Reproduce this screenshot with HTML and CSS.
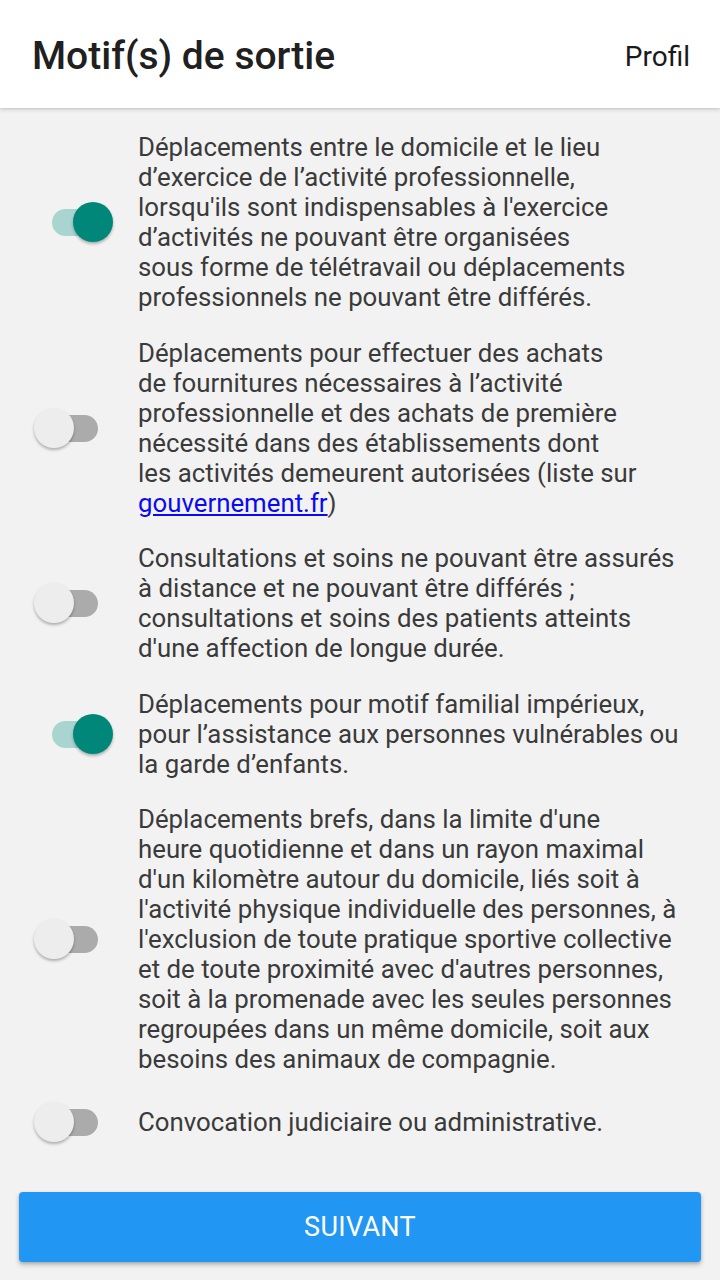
FILE: index.html
```html
<!DOCTYPE html>
<html lang="fr">
<head>
<meta charset="utf-8">
<title>Motif(s) de sortie</title>
<link rel="stylesheet" href="styles.css">
</head>
<body>
<header class="appbar">
  <h1 class="title">Motif(s) de sortie</h1>
  <span class="action">Profil</span>
</header>
<main class="list">
  <div class="row">
    <div class="switch on"><span class="track"></span><span class="thumb"></span></div>
    <p class="label">Déplacements entre le domicile et le lieu<br>d’exercice de l’activité professionnelle,<br>lorsqu'ils sont indispensables à l'exercice<br>d’activités ne pouvant être organisées<br>sous forme de télétravail ou déplacements<br>professionnels ne pouvant être différés.</p>
  </div>
  <div class="row">
    <div class="switch"><span class="track"></span><span class="thumb"></span></div>
    <p class="label">Déplacements pour effectuer des achats<br>de fournitures nécessaires à l’activité<br>professionnelle et des achats de première<br>nécessité dans des établissements dont<br>les activités demeurent autorisées (liste sur<br><a class="link" href="#">gouvernement.fr</a>)</p>
  </div>
  <div class="row">
    <div class="switch"><span class="track"></span><span class="thumb"></span></div>
    <p class="label">Consultations et soins ne pouvant être assurés<br>à distance et ne pouvant être différés ;<br>consultations et soins des patients atteints<br>d'une affection de longue durée.</p>
  </div>
  <div class="row">
    <div class="switch on"><span class="track"></span><span class="thumb"></span></div>
    <p class="label">Déplacements pour motif familial impérieux,<br>pour l’assistance aux personnes vulnérables ou<br>la garde d’enfants.</p>
  </div>
  <div class="row">
    <div class="switch"><span class="track"></span><span class="thumb"></span></div>
    <p class="label">Déplacements brefs, dans la limite d'une<br>heure quotidienne et dans un rayon maximal<br>d'un kilomètre autour du domicile, liés soit à<br>l'activité physique individuelle des personnes, à<br>l'exclusion de toute pratique sportive collective<br>et de toute proximité avec d'autres personnes,<br>soit à la promenade avec les seules personnes<br>regroupées dans un même domicile, soit aux<br>besoins des animaux de compagnie.</p>
  </div>
  <div class="row">
    <div class="switch"><span class="track"></span><span class="thumb"></span></div>
    <p class="label">Convocation judiciaire ou administrative.</p>
  </div>
</main>
<footer class="actions">
  <button class="btn" type="button">SUIVANT</button>
</footer>
</body>
</html>
```
FILE: styles.css
```css
* { box-sizing: border-box; }
html, body {
  margin: 0;
  padding: 0;
  background: #f2f2f2;
  font-family: Roboto, "Noto Sans", sans-serif;
}
body {
  width: 720px;
  height: 1280px;
  overflow: hidden;
}
.appbar {
  height: 108px;
  background: #fff;
  display: flex;
  align-items: center;
  justify-content: space-between;
  padding: 4px 30px 0 32px;
  box-shadow: 0 2px 4px rgba(0,0,0,0.12), 0 1px 2px rgba(0,0,0,0.08);
  position: relative;
  z-index: 1;
}
.title {
  margin: 0;
  font-size: 39px;
  font-weight: 500;
  color: #202020;
  letter-spacing: 0;
}
.action {
  font-size: 28px;
  color: #1a1a1a;
}
.list {
  padding: 24px 0 0 33px;
  display: flex;
  flex-direction: column;
  gap: 25.5px;
}
.row {
  display: flex;
  align-items: center;
  gap: 25px;
  min-height: 44px;
}
.label {
  margin: 0;
  font-size: 25.8px;
  line-height: 30px;
  color: #3a3a3a;
  white-space: nowrap;
}
.link {
  color: #0a0af0;
  text-decoration: underline;
}
.switch {
  position: relative;
  width: 80px;
  height: 40px;
  flex: none;
}
.track {
  position: absolute;
  left: 5px;
  top: 7px;
  width: 60px;
  height: 27px;
  border-radius: 14px;
  background: #ababab;
}
.thumb {
  position: absolute;
  left: 1px;
  top: 0;
  width: 40px;
  height: 40px;
  border-radius: 50%;
  background: #ededed;
  box-shadow: 0 2px 3px rgba(0,0,0,0.28);
}
.switch.on .track {
  left: 19px;
  background: #a8d5d0;
}
.switch.on .thumb {
  left: 40px;
  background: #00877a;
}
.actions {
  padding: 48px 19px 0 19px;
}
.btn {
  display: block;
  width: 100%;
  height: 70px;
  border: 0;
  border-radius: 4px;
  background: #2196f3;
  color: #fff;
  font-family: Roboto, "Noto Sans", sans-serif;
  font-size: 27px;
  letter-spacing: 0.3px;
  box-shadow: 0 3px 5px rgba(0,0,0,0.22), 0 1px 3px rgba(0,0,0,0.14);
}
```
